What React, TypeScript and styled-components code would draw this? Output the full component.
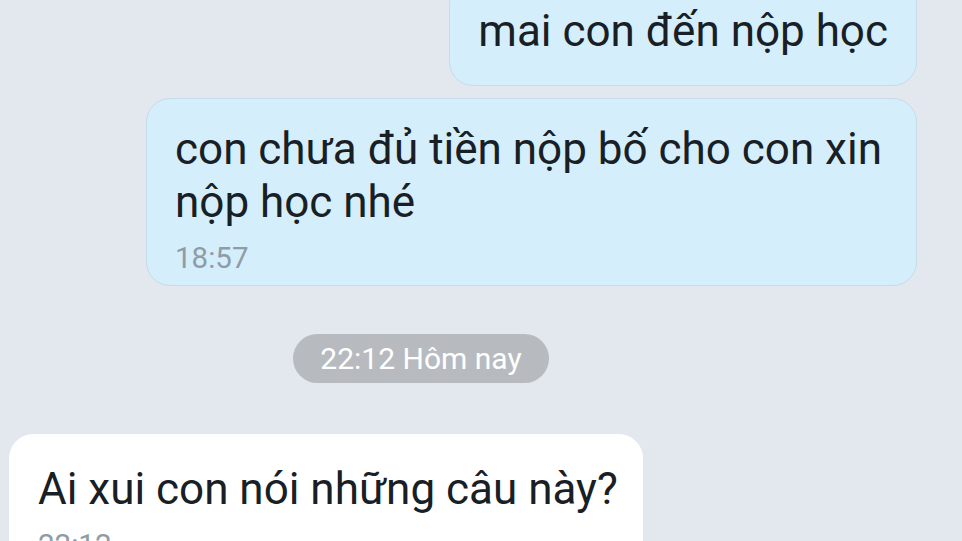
import React from "react";
import styled, { createGlobalStyle } from "styled-components";

const Global = createGlobalStyle`
  html, body { margin: 0; padding: 0; background: #e3e7ee; }
  body { font-family: Roboto, "Noto Sans", sans-serif; }
`;

const Screen = styled.div`
  width: 962px;
  height: 541px;
  overflow: hidden;
  background: #e3e7ee;
  display: flex;
  flex-direction: column;
`;

const Row = styled.div<{ $side: "left" | "right"; $gap: number }>`
  display: flex;
  justify-content: ${(p) => (p.$side === "right" ? "flex-end" : "flex-start")};
  padding: 0 ${(p) => (p.$side === "right" ? "45px" : "0")} 0 ${(p) => (p.$side === "left" ? "9px" : "0")};
  margin-top: ${(p) => p.$gap}px;
`;

const Bubble = styled.div<{ $mine: boolean; $width?: number; $pt: number; $pb: number }>`
  box-sizing: border-box;
  ${(p) => (p.$width ? `width: ${p.$width}px;` : "")}
  background: ${(p) => (p.$mine ? "#d5eefb" : "#ffffff")};
  border: 1px solid ${(p) => (p.$mine ? "#c6dcea" : "#ffffff")};
  border-radius: 24px;
  padding: ${(p) => p.$pt}px ${(p) => (p.$mine ? 28 : 20)}px ${(p) => p.$pb}px 28px;
  color: #182026;
`;

const MsgText = styled.div`
  font-size: 44px;
  line-height: 53px;
`;

const Time = styled.div`
  font-size: 29.5px;
  line-height: 32px;
  color: #8e9ca6;
  margin-top: 13px;
`;

const CenterRow = styled.div`
  display: flex;
  justify-content: flex-start;
  padding-left: 293px;
  margin-top: 48px;
`;

const Pill = styled.div`
  box-sizing: border-box;
  height: 49px;
  width: 256px;
  border-radius: 25px;
  background: #b7bbc0;
  color: #ffffff;
  font-size: 30px;
  display: flex;
  align-items: center;
  justify-content: center;
`;

export default function App() {
  return (
    <>
      <Global />
      <Screen>
        <Row $side="right" $gap={-20}>
          <Bubble $mine $pt={24} $pb={27}>
            <MsgText>mai con đến nộp học</MsgText>
          </Bubble>
        </Row>
        <Row $side="right" $gap={12}>
          <Bubble $mine $width={771} $pt={24} $pb={11}>
            <MsgText>con chưa đủ tiền nộp bố cho con xin nộp học nhé</MsgText>
            <Time>18:57</Time>
          </Bubble>
        </Row>
        <CenterRow>
          <Pill>22:12 Hôm nay</Pill>
        </CenterRow>
        <Row $side="left" $gap={51}>
          <Bubble $mine={false} $width={634} $pt={28} $pb={11}>
            <MsgText>Ai xui con nói những câu này?</MsgText>
            <Time>22:12</Time>
          </Bubble>
        </Row>
      </Screen>
    </>
  );
}
